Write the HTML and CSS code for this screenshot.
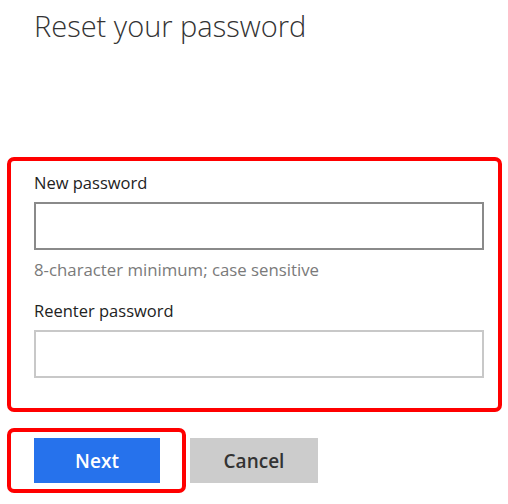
FILE: index.html
```html
<!DOCTYPE html>
<html lang="en">
<head>
  <meta charset="UTF-8">
  <meta name="viewport" content="width=device-width, initial-scale=1">
  <title>Reset your password</title>
  <link rel="stylesheet" href="styles.css">
</head>
<body>
  <div class="page">
    <h1>Reset your password</h1>
    <form id="resetForm">
      <div class="fields highlight">
        <label for="newPassword">New password</label>
        <input type="password" id="newPassword" class="dark">
        <p class="hint">8-character minimum; case sensitive</p>
        <label for="confirmPassword">Reenter password</label>
        <input type="password" id="confirmPassword">
      </div>
      <div class="actions">
        <div class="highlight next-wrap">
          <button type="submit" class="btn primary">Next</button>
        </div>
        <button type="button" class="btn secondary">Cancel</button>
      </div>
    </form>
  </div>
</body>
</html>
```

FILE: styles.css
```css
body {
  font-family: "Open Sans", "Noto Sans", sans-serif;
  margin: 0;
  padding: 0;
  background: #fff;
  color: #222;
}
.page {
  padding: 0 6px 0 7px;
}
h1 {
  margin: 0 0 0 27px;
  padding-top: 8px;
  height: 157px;
  font-size: 29px;
  font-weight: 300;
  line-height: 36px;
  color: #333;
  box-sizing: border-box;
}
.highlight {
  border: 4px solid #f00;
  border-radius: 7px;
}
.fields {
  padding: 11px 14px 30px 23px;
  display: flex;
  flex-direction: column;
}
label {
  font-size: 16.5px;
  line-height: 22px;
  color: #222;
}
input {
  height: 48px;
  margin-top: 8px;
  border: 2px solid #c8c8c8;
  box-sizing: border-box;
  width: 450px;
  font-size: 16px;
}
input.dark {
  border-color: #8a8a8a;
}
.hint {
  margin: 9px 0 19px;
  font-size: 16.8px;
  line-height: 22px;
  color: #7a7a7a;
}
.actions {
  display: flex;
  align-items: center;
  margin-top: 16px;
}
.next-wrap {
  padding: 6px 22px 6px 23px;
}
.btn {
  width: 126px;
  height: 45px;
  border: none;
  font-family: "Open Sans", "Noto Sans", sans-serif;
  font-size: 19px;
  font-weight: 600;
  cursor: pointer;
}
.primary {
  background: #2672ec;
  color: #fff;
}
.secondary {
  margin-left: 4px;
  width: 128px;
  background: #cccccc;
  color: #333;
}
```
